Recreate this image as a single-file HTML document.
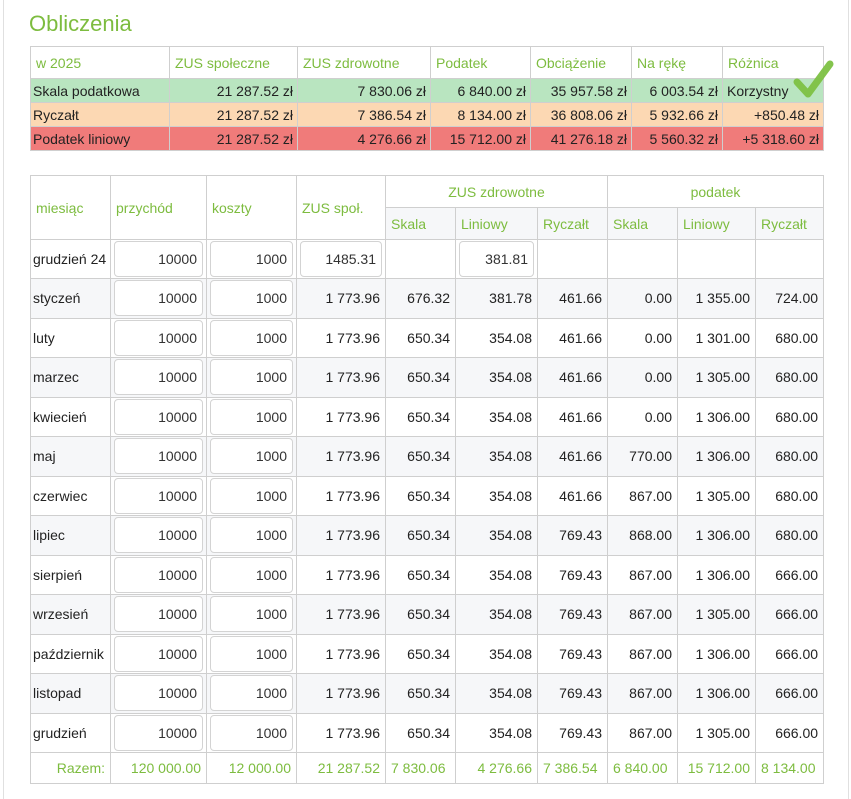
<!DOCTYPE html>
<html><head><meta charset="utf-8"><style>
body{margin:0;width:851px;height:798px;background:#fff;font-family:"Liberation Sans",Arial,sans-serif;font-size:14px;color:#222;position:relative;overflow:hidden}
.frame{position:absolute;left:3px;top:-1px;width:844px;height:800px;border-left:1px solid #e0e0e0;border-right:1px solid #e0e0e0}
h1{position:absolute;left:29px;top:11px;margin:0;font-weight:normal;font-size:22px;color:#7dbc3f}
table{position:absolute;left:30px;border-collapse:collapse;table-layout:fixed}
td,th{border:1px solid #cfcfcf;padding:0 5px;white-space:nowrap;overflow:hidden}
th{font-weight:normal;color:#7dbc3f;text-align:left}
.t1{top:46px;width:793px}
.t1 td{text-align:right;padding:0 4px}
.t1 td:first-child{text-align:left;padding-left:2px}
.g td{background:#b9e5c0}.o td{background:#fcd8b3}.r td{background:#f07b7a}
.t2{top:175px;width:793px}
.t2 td{text-align:right}
.t2 td:first-child{text-align:left;padding-left:2px}
.t2 tr.s td,.t2 tr.s th{background:#f6f7f9}
.inp{display:block;border:1px solid #d3d3d3;border-radius:4px;height:34px;line-height:34px;margin:0 -2px;padding-right:5px;background:#fff;color:#333;text-align:right}
.tot td{color:#7dbc3f}
.c{text-align:center!important}
</style></head><body>
<div class="frame"></div>
<h1>Obliczenia</h1>
<table class="t1">
<colgroup><col style="width:139px"><col style="width:128px"><col style="width:133px"><col style="width:100px"><col style="width:101px"><col style="width:91px"><col style="width:101px"></colgroup>
<tr style="height:32px"><th>w 2025</th><th>ZUS społeczne</th><th>ZUS zdrowotne</th><th>Podatek</th><th>Obciążenie</th><th>Na rękę</th><th>Różnica</th></tr>
<tr class="g" style="height:24px"><td>Skala podatkowa</td><td>21 287.52 zł</td><td>7 830.06 zł</td><td>6 840.00 zł</td><td>35 957.58 zł</td><td>6 003.54 zł</td><td style="text-align:left">Korzystny</td></tr>
<tr class="o" style="height:24px"><td>Ryczałt</td><td>21 287.52 zł</td><td>7 386.54 zł</td><td>8 134.00 zł</td><td>36 808.06 zł</td><td>5 932.66 zł</td><td>+850.48 zł</td></tr>
<tr class="r" style="height:24px"><td>Podatek liniowy</td><td>21 287.52 zł</td><td>4 276.66 zł</td><td>15 712.00 zł</td><td>41 276.18 zł</td><td>5 560.32 zł</td><td>+5 318.60 zł</td></tr>
</table>
<svg style="position:absolute;left:792px;top:58px" width="44" height="42" viewBox="0 0 44 42"><path d="M5 24 L16 36 L38 6" fill="none" stroke="#7dc143" stroke-width="7" stroke-linecap="round" stroke-linejoin="round" opacity="0.95"/></svg>
<table class="t2">
<colgroup><col style="width:80px"><col style="width:96px"><col style="width:90px"><col style="width:89px"><col style="width:70px"><col style="width:82px"><col style="width:70px"><col style="width:70px"><col style="width:78px"><col style="width:68px"></colgroup>
<tr style="height:32px"><th rowspan="2">miesiąc</th><th rowspan="2">przychód</th><th rowspan="2">koszty</th><th rowspan="2">ZUS społ.</th><th colspan="3" class="c">ZUS zdrowotne</th><th colspan="3" class="c">podatek</th></tr>
<tr class="s" style="height:32px"><th>Skala</th><th>Liniowy</th><th>Ryczałt</th><th>Skala</th><th>Liniowy</th><th>Ryczałt</th></tr>
<tr style="height:39px"><td>grudzień 24</td><td><span class="inp">10000</span></td><td><span class="inp">1000</span></td><td><span class="inp">1485.31</span></td><td></td><td><span class="inp">381.81</span></td><td></td><td></td><td></td><td></td></tr>
<tr class="s" style="height:39.5px"><td>styczeń</td><td><span class="inp">10000</span></td><td><span class="inp">1000</span></td><td>1 773.96</td><td>676.32</td><td>381.78</td><td>461.66</td><td>0.00</td><td>1 355.00</td><td>724.00</td></tr>
<tr style="height:39.5px"><td>luty</td><td><span class="inp">10000</span></td><td><span class="inp">1000</span></td><td>1 773.96</td><td>650.34</td><td>354.08</td><td>461.66</td><td>0.00</td><td>1 301.00</td><td>680.00</td></tr>
<tr class="s" style="height:39.5px"><td>marzec</td><td><span class="inp">10000</span></td><td><span class="inp">1000</span></td><td>1 773.96</td><td>650.34</td><td>354.08</td><td>461.66</td><td>0.00</td><td>1 305.00</td><td>680.00</td></tr>
<tr style="height:39.5px"><td>kwiecień</td><td><span class="inp">10000</span></td><td><span class="inp">1000</span></td><td>1 773.96</td><td>650.34</td><td>354.08</td><td>461.66</td><td>0.00</td><td>1 306.00</td><td>680.00</td></tr>
<tr class="s" style="height:39.5px"><td>maj</td><td><span class="inp">10000</span></td><td><span class="inp">1000</span></td><td>1 773.96</td><td>650.34</td><td>354.08</td><td>461.66</td><td>770.00</td><td>1 306.00</td><td>680.00</td></tr>
<tr style="height:39.5px"><td>czerwiec</td><td><span class="inp">10000</span></td><td><span class="inp">1000</span></td><td>1 773.96</td><td>650.34</td><td>354.08</td><td>461.66</td><td>867.00</td><td>1 305.00</td><td>680.00</td></tr>
<tr class="s" style="height:39.5px"><td>lipiec</td><td><span class="inp">10000</span></td><td><span class="inp">1000</span></td><td>1 773.96</td><td>650.34</td><td>354.08</td><td>769.43</td><td>868.00</td><td>1 306.00</td><td>680.00</td></tr>
<tr style="height:39.5px"><td>sierpień</td><td><span class="inp">10000</span></td><td><span class="inp">1000</span></td><td>1 773.96</td><td>650.34</td><td>354.08</td><td>769.43</td><td>867.00</td><td>1 306.00</td><td>666.00</td></tr>
<tr class="s" style="height:39.5px"><td>wrzesień</td><td><span class="inp">10000</span></td><td><span class="inp">1000</span></td><td>1 773.96</td><td>650.34</td><td>354.08</td><td>769.43</td><td>867.00</td><td>1 305.00</td><td>666.00</td></tr>
<tr style="height:39.5px"><td>październik</td><td><span class="inp">10000</span></td><td><span class="inp">1000</span></td><td>1 773.96</td><td>650.34</td><td>354.08</td><td>769.43</td><td>867.00</td><td>1 306.00</td><td>666.00</td></tr>
<tr class="s" style="height:39.5px"><td>listopad</td><td><span class="inp">10000</span></td><td><span class="inp">1000</span></td><td>1 773.96</td><td>650.34</td><td>354.08</td><td>769.43</td><td>867.00</td><td>1 306.00</td><td>666.00</td></tr>
<tr style="height:39.5px"><td>grudzień</td><td><span class="inp">10000</span></td><td><span class="inp">1000</span></td><td>1 773.96</td><td>650.34</td><td>354.08</td><td>769.43</td><td>867.00</td><td>1 305.00</td><td>666.00</td></tr>
<tr class="tot" style="height:31px"><td style="text-align:right;padding-right:5px">Razem:</td><td>120 000.00</td><td>12 000.00</td><td>21 287.52</td><td style="text-align:left">7 830.06</td><td>4 276.66</td><td style="text-align:left">7 386.54</td><td style="text-align:left">6 840.00</td><td>15 712.00</td><td style="text-align:left">8 134.00</td></tr>
</table>
</body></html>
